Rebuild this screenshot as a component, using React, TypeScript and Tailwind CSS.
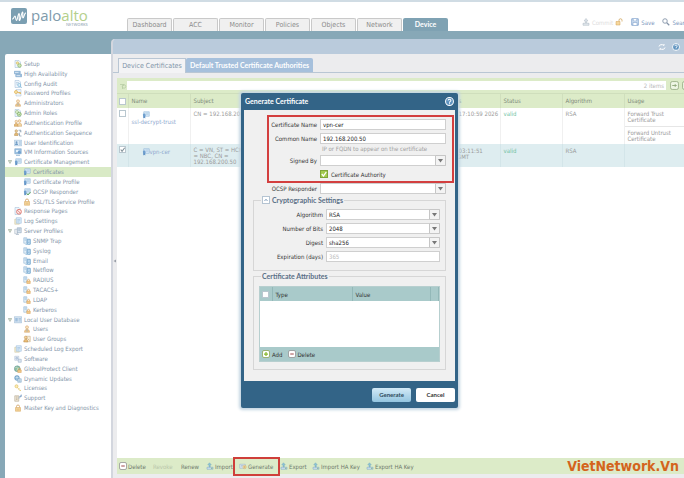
import { useState, type ReactNode } from 'react';

type IconName =
  | 'setup' | 'ha' | 'audit' | 'key' | 'person' | 'roles' | 'people' | 'sequence' | 'userid' | 'vm'
  | 'cert' | 'certOk' | 'lock' | 'blocked' | 'log' | 'servers' | 'server' | 'serverLock' | 'db'
  | 'group' | 'software' | 'globe' | 'updates' | 'license' | 'support' | 'upload' | 'generate';

const page = <path d="M2 1h8l3 3v11H2z" fill="#eef5fb" stroke="#9dbbd6" />;
const smallLock = (
  <>
    <path d="M9 10V8.500a2 2 0 0 1 4 0V10" fill="none" stroke="#d8a35c" strokeWidth="1.400" />
    <path d="M7.500 10h7v5h-7z" fill="#f0c98a" stroke="#d8a35c" />
  </>
);
const serverShape = (
  <>
    <path d="M1.500 1.500h6v11h-6z" fill="#e4eff8" stroke="#7fabcf" />
    <path d="M3 4h3M3 6.500h3" stroke="#7fabcf" />
  </>
);
const personShape = (
  <>
    <circle cx="8" cy="4.500" r="3" fill="#fbe3bf" stroke="#cf9d5f" />
    <path d="M3 14.500c0-4 2-6 5-6s5 2 5 6z" fill="#f1cd92" stroke="#cf9d5f" />
    <path d="M8 9v4" stroke="#7e9cc0" strokeWidth="1.500" />
  </>
);
const certShape = (
  <>
    <path d="M3.500 1.500h11v9h-11z" fill="#dcebf7" stroke="#7fa9d0" />
    <path d="M7 4h6M8 6.500h5" stroke="#8fb4d6" />
    <path d="M2.500 9v6l2-1.500 2 1.500V9z" fill="#5b8fc4" />
    <circle cx="4.500" cy="8" r="2.800" fill="#6f9fce" />
  </>
);

const icons: Record<IconName, ReactNode> = {
  setup: (
    <>
      {page}
      <circle cx="7" cy="6" r="2.500" fill="#f5e29a" stroke="#c9b25e" />
      <circle cx="11" cy="11" r="3.500" fill="#cfe6b8" stroke="#8fb56c" strokeWidth="1.500" />
    </>
  ),
  ha: (
    <>
      <path d="M.5 2.500h12v5H.5zM3.500 8.500h12v5h-12z" fill="#9fc0dd" stroke="#6d9bc4" />
      <path d="M2 5h7M5 11h7" stroke="#fff" />
    </>
  ),
  audit: (
    <>
      {page}
      <path d="M4 5h6M4 8h4" stroke="#9dbbd6" />
      <circle cx="10.500" cy="10" r="3" fill="#e2f2fb" stroke="#6fb0d6" strokeWidth="1.300" />
      <path d="m13 12.500 2.500 3" stroke="#6fb0d6" strokeWidth="1.500" />
    </>
  ),
  key: (
    <>
      <path d="M4 1h10v13H4z" fill="#edf3fa" stroke="#a9c0d8" />
      <circle cx="4" cy="6" r="3" fill="#fbe6ae" stroke="#dcae4d" strokeWidth="1.400" />
      <path d="M7 7h6v3M10.500 7v2.500" fill="none" stroke="#dcae4d" strokeWidth="1.500" />
    </>
  ),
  person: personShape,
  roles: (
    <>
      {page}
      <circle cx="6" cy="6" r="3" fill="#e6f3d9" stroke="#79a95c" />
      <circle cx="10.500" cy="10.500" r="4" fill="#cfe7bd" stroke="#79a95c" strokeWidth="1.300" />
      <path d="m9 10.500 1.500 1.500 2-3" fill="none" stroke="#5f9c46" />
    </>
  ),
  people: (
    <>
      <circle cx="4.500" cy="5" r="2.500" fill="#fbe3bf" stroke="#cf9d5f" />
      <circle cx="11" cy="4" r="2.700" fill="#fbe3bf" stroke="#cf9d5f" />
      <path d="M.5 14.500c0-4 1.500-6 4-6s4 2 4 6z" fill="#e9bd78" stroke="#b98847" />
      <path d="M7.500 14.500c0-4 1.500-6.500 4-6.500s4 2.500 4 6.500z" fill="#f3d9a5" stroke="#cf9d5f" />
    </>
  ),
  sequence: (
    <>
      <circle cx="4.500" cy="4" r="2.500" fill="#efd3a0" stroke="#b08a4f" />
      <path d="M1 13c0-4 1-5.500 3.500-5.500S8 9 8 13z" fill="#e3b873" stroke="#b08a4f" />
      <path d="M9 2.500h5l-2 3h3M8 10h3v4h4M11 7.500v2" fill="none" stroke="#7e93a8" strokeWidth="1.400" />
    </>
  ),
  userid: (
    <>
      <path d="M.5 2.500h15v11H.5z" fill="#dceaf6" stroke="#8db0d1" />
      <circle cx="5" cy="6.500" r="2" fill="#6f9cc6" />
      <path d="M2 12c0-2.500 1-3.500 3-3.500s3 1 3 3.500z" fill="#6f9cc6" />
      <path d="M10 5.500h4M10 8h4M10 10.500h4" stroke="#8db0d1" />
    </>
  ),
  vm: (
    <>
      <path d="M1.500 1.500h13v10h-13z" fill="#9fc3e2" stroke="#6d9bc4" />
      <path d="M4 4h5v4H4z" fill="#e7f2fb" />
      <circle cx="10.500" cy="8.500" r="3" fill="#6f9fce" />
      <path d="M4 14.500h8" stroke="#6d9bc4" strokeWidth="1.500" />
    </>
  ),
  cert: certShape,
  certOk: (
    <>
      {certShape}
      <path d="m7.500 11 2.500 3 5-6" fill="none" stroke="#67ab5c" strokeWidth="2" />
    </>
  ),
  lock: (
    <>
      <path d="M5 7V5a3 3 0 0 1 6 0v2" fill="none" stroke="#cfa060" strokeWidth="1.600" />
      <path d="M3 7h10v7.500H3z" fill="#f6d79e" stroke="#d3a055" />
      <path d="M5 10h6M5 12h6" stroke="#dfb36c" />
    </>
  ),
  blocked: (
    <>
      {page}
      <circle cx="10" cy="9.500" r="4.800" fill="#fdeceb" stroke="#d9685f" strokeWidth="1.600" />
      <path d="m7 6.500 6 6" stroke="#d9685f" strokeWidth="1.600" />
    </>
  ),
  log: (
    <>
      <path d="M1.500 4.500h9v10h-9z" fill="#f7efd0" stroke="#c9c19a" />
      <path d="M4.500 1.500h10v11h-10z" fill="#e0eefa" stroke="#88b1d6" />
      <path d="M6.500 5h6M6.500 7.500h6M6.500 10h4" stroke="#88b1d6" />
    </>
  ),
  servers: (
    <>
      <path d="M1.500 4.500h6v9h-6z" fill="#eef1f4" stroke="#9aaab9" />
      <path d="M6.500 1.500h8v10h-8z" fill="#d6e2ed" stroke="#8299b0" />
      <path d="M8.500 4h4M8.500 6.500h4M4 15h6" stroke="#8299b0" />
    </>
  ),
  server: (
    <>
      {serverShape}
      <path d="M8.500 4.500h6v10h-6z" fill="#d3e6f5" stroke="#5f9ac8" strokeWidth="1.600" />
      <path d="M10 8h3M10 11h3M5 15h3" stroke="#5f9ac8" />
    </>
  ),
  serverLock: (
    <>
      {serverShape}
      {smallLock}
    </>
  ),
  db: (
    <>
      <path d="M.5 1.500h15v12H.5z" fill="#dbe8f4" stroke="#8aaccd" />
      <path d="M2.500 4h5v7h-5z" fill="#9fbfdd" />
      <path d="M9 5h5M9 7.500h5M9 10h5" stroke="#7ea5ca" />
    </>
  ),
  group: (
    <>
      <path d="M6.500 2.500h8v11h-8z" fill="#f6edd9" stroke="#c3a67a" />
      <circle cx="5.500" cy="5" r="2.800" fill="#f4d5a0" stroke="#b98847" />
      <path d="M1.500 14c0-4 1.500-5.500 4-5.500s4 1.500 4 5.500z" fill="#e9bd78" stroke="#b98847" />
      <path d="m9 7 4 4" stroke="#b98847" />
    </>
  ),
  software: (
    <>
      <path d="M1.500 2.500h8v8h-8z" fill="#edf2f8" stroke="#a3b5cc" />
      <circle cx="5.500" cy="6.500" r="2" fill="#c7d6e8" stroke="#90a8c6" />
      <path d="M8.500 8.500h6v6h-6z" fill="#dce6f1" stroke="#90a8c6" />
    </>
  ),
  globe: (
    <>
      <circle cx="6.500" cy="7.500" r="5.800" fill="#8fbf9e" stroke="#5d8f9d" />
      <path d="M3 5c3-2 3 2 5 1s-1 5-3 4" fill="none" stroke="#e7f4ec" strokeWidth="1.300" />
      {smallLock}
    </>
  ),
  updates: (
    <>
      <circle cx="6" cy="6" r="4.800" fill="#8ab6d6" stroke="#5a8db8" />
      <path d="M3 5h6M6 2v8" stroke="#e6f1f9" />
      <path d="M7.500 7.500h7v7h-7z" fill="#e2edf6" stroke="#6f98bd" />
      <path d="M9 10h4M9 12.500h4" stroke="#6f98bd" />
    </>
  ),
  license: (
    <>
      <circle cx="5" cy="4.500" r="3" fill="#fcedb9" stroke="#dfc05c" strokeWidth="1.300" />
      <path d="m7 7 5 6.500 2-1.500M9.500 10l1.500-1.200" fill="none" stroke="#dfc05c" strokeWidth="1.500" />
    </>
  ),
  support: (
    <>
      <path d="M1.500 3.500h8v11h-8z" fill="#eee6d6" stroke="#a99c80" />
      <path d="M4 6h3M4 8.500h3M4 11h3" stroke="#a99c80" />
      <path d="M9 8c3 0 5-2 5-6M14.500 1v4h-4" fill="none" stroke="#7c9fc6" strokeWidth="1.500" />
    </>
  ),
  upload: (
    <>
      <path d="M2 10.500h12v4H2z" fill="#cfe0ee" stroke="#7ba4c4" />
      <path d="M7 1.500 3.500 5.500H6V10h2.500V5.500h2z" fill="#8fc4d8" stroke="#6ba3bb" strokeWidth=".8" />
      <path d="M10 12.500h3" stroke="#6bab6b" strokeWidth="1.500" />
    </>
  ),
  generate: (
    <>
      <path d="M1.500 4.500h11v8h-11z" fill="#e1ecf5" stroke="#8ca9c2" />
      <path d="M3.500 7h5M3.500 9.500h3" stroke="#8ca9c2" />
      <circle cx="11" cy="10" r="3.300" fill="#f6e3b4" stroke="#c9a75a" />
      <path d="M11 8v4M9 10h4" stroke="#c9a75a" />
    </>
  ),
};

function Icon({ name, className = 'size-2' }: { name: IconName; className?: string }) {
  return (
    <svg viewBox="0 0 16 16" className={`shrink-0 ${className}`} aria-hidden="true">
      {icons[name]}
    </svg>
  );
}

type NavItem = { label: string; icon: IconName; child?: boolean; open?: boolean; active?: boolean };

const navItems: NavItem[] = [
  { label: 'Setup', icon: 'setup' },
  { label: 'High Availability', icon: 'ha' },
  { label: 'Config Audit', icon: 'audit' },
  { label: 'Password Profiles', icon: 'key' },
  { label: 'Administrators', icon: 'person' },
  { label: 'Admin Roles', icon: 'roles' },
  { label: 'Authentication Profile', icon: 'people' },
  { label: 'Authentication Sequence', icon: 'sequence' },
  { label: 'User Identification', icon: 'userid' },
  { label: 'VM Information Sources', icon: 'vm' },
  { label: 'Certificate Management', icon: 'cert', open: true },
  { label: 'Certificates', icon: 'cert', child: true, active: true },
  { label: 'Certificate Profile', icon: 'cert', child: true },
  { label: 'OCSP Responder', icon: 'certOk', child: true },
  { label: 'SSL/TLS Service Profile', icon: 'lock', child: true },
  { label: 'Response Pages', icon: 'blocked' },
  { label: 'Log Settings', icon: 'log' },
  { label: 'Server Profiles', icon: 'servers', open: true },
  { label: 'SNMP Trap', icon: 'server', child: true },
  { label: 'Syslog', icon: 'server', child: true },
  { label: 'Email', icon: 'server', child: true },
  { label: 'Netflow', icon: 'server', child: true },
  { label: 'RADIUS', icon: 'serverLock', child: true },
  { label: 'TACACS+', icon: 'serverLock', child: true },
  { label: 'LDAP', icon: 'serverLock', child: true },
  { label: 'Kerberos', icon: 'serverLock', child: true },
  { label: 'Local User Database', icon: 'db', open: true },
  { label: 'Users', icon: 'person', child: true },
  { label: 'User Groups', icon: 'group', child: true },
  { label: 'Scheduled Log Export', icon: 'log' },
  { label: 'Software', icon: 'software' },
  { label: 'GlobalProtect Client', icon: 'globe' },
  { label: 'Dynamic Updates', icon: 'updates' },
  { label: 'Licenses', icon: 'license' },
  { label: 'Support', icon: 'support' },
  { label: 'Master Key and Diagnostics', icon: 'lock' },
];

const mainTabs = ['Dashboard', 'ACC', 'Monitor', 'Policies', 'Objects', 'Network', 'Device'];

function Logo() {
  return (
    <div className="flex items-start gap-1">
      <svg viewBox="0 0 32 32" className="size-4" aria-hidden="true">
        <rect width="32" height="32" rx="4" fill="#7b9fb2" />
        <path
          d="M3 22c3 0 3-6 5-6s1 9 3 9 3-14 5-14-1 14 1 14 4-17 6-17-1 12 1 12 2-8 5-10"
          fill="none"
          stroke="#fff"
          strokeWidth="2.200"
          strokeLinecap="round"
        />
      </svg>
      <div className="flex flex-col items-end font-['Open_Sans',sans-serif]">
        <span className="text-[15px] leading-[15px] text-[#7f9bac]">
          palo<span className="text-[#b4cf8c]">alto</span>
        </span>
        <span className="text-[4px] leading-1 font-semibold text-[#9fb2bd]">NETWORKS</span>
      </div>
    </div>
  );
}

function HelpIcon({ className }: { className: string }) {
  return (
    <svg viewBox="0 0 16 16" className={className} aria-hidden="true">
      <circle cx="8" cy="8" r="7" fill="#5f93bf" stroke="#fff" strokeWidth="1.800" />
      <path d="M5.500 6.300C5.500 3.300 10.500 3.300 10.500 6.200 10.500 8 8 7.800 8 10M8 11.300v1.500" fill="none" stroke="#fff" strokeWidth="1.800" />
    </svg>
  );
}

function Header() {
  return (
    <header className="flex h-[31px] items-end justify-between border-t-2 border-[#d0dce4] bg-white pl-[11px]">
      <div className="flex w-[116px] shrink-0 self-start pt-1.5">
        <Logo />
      </div>
      <nav className="flex flex-1 gap-px">
        {mainTabs.map(tab => (
          <a
            key={tab}
            href="#"
            className={
              tab === 'Device'
                ? 'flex h-[13px] w-[45px] items-center justify-center rounded-t-xs bg-[#7fa2b3] font-[Lato,sans-serif] text-[7px] font-bold text-white'
                : 'flex h-[13px] w-[45px] items-center justify-center rounded-t-xs border border-b-0 border-[#c9c9c9] bg-[#f0f0f0] text-[7px] text-[#8b8b8b]'
            }
          >
            {tab}
          </a>
        ))}
      </nav>
      <div className="flex h-[18px] w-[102px] shrink-0 items-center overflow-hidden text-[6px] whitespace-nowrap text-[#7c96bd]">
        <button type="button" disabled className="flex items-center gap-0.5 text-[#dcdcdc]">
          <svg viewBox="0 0 16 16" className="size-2" aria-hidden="true">
            <path d="M2 10.500h12v4H2zM8 1l3.500 4.500h-2V9h-3V5.500h-2z" fill="#e3e9ee" stroke="#a4b1bc" />
          </svg>
          Commit
        </button>
        <svg viewBox="0 0 16 16" className="ml-0.5 size-2 shrink-0" aria-hidden="true">
          <path d="M8 7V4.500a3 3 0 0 1 6 0V7" fill="none" stroke="#d2a55b" strokeWidth="1.600" />
          <path d="M2 7h8v7H2z" fill="#f6d79e" stroke="#d3a055" />
        </svg>
        <button type="button" className="ml-2 flex items-center gap-0.5">
          <svg viewBox="0 0 16 16" className="size-2" aria-hidden="true">
            <path d="M1.500 1.500h13v13h-13z" fill="#dbe8f5" stroke="#6d93c4" strokeWidth="1.500" />
            <path d="M4.500 2v4h7V2M4 14V9h8v5" fill="#fff" stroke="#6d93c4" />
          </svg>
          Save
        </button>
        <button type="button" className="ml-2 flex items-center gap-0.5">
          <svg viewBox="0 0 16 16" className="size-2" aria-hidden="true">
            <circle cx="6" cy="6" r="4.500" fill="none" stroke="#8494a8" strokeWidth="1.800" />
            <path d="m9.500 9.500 5 5" stroke="#8494a8" strokeWidth="2.500" />
          </svg>
          Search
        </button>
      </div>
    </header>
  );
}

function Sidebar() {
  return (
    <nav className="mt-[23px] w-[106px] shrink-0 rounded-tl-xs bg-white pt-[5px]">
      <ul className="grid h-[354px] auto-rows-fr">
        {navItems.map(item => (
          <li key={item.label} className={item.active ? 'flex bg-[#d9eac6]' : 'flex'}>
            <a
              href="#"
              className={`flex items-center gap-0.5 text-[6px] leading-none whitespace-nowrap text-[#8495a9] ${item.child ? 'pl-[18px]' : item.open ? 'pl-[3px]' : 'pl-[9px]'}`}
            >
              {item.open && (
                <svg viewBox="0 0 8 8" className="size-1" aria-hidden="true">
                  <path d="M.5 1h7L4 7z" fill="#d5ddd0" stroke="#8f9c8a" />
                </svg>
              )}
              <Icon name={item.icon} />
              {item.label}
            </a>
          </li>
        ))}
      </ul>
    </nav>
  );
}

function Tick({ label, checked }: { label: string; checked?: boolean }) {
  return (
    <span className="relative block size-[7px]">
      <input
        type="checkbox"
        aria-label={label}
        defaultChecked={checked}
        className="peer block size-[7px] appearance-none border border-[#b9c7cf] bg-white"
      />
      <svg viewBox="0 0 8 8" className="pointer-events-none absolute inset-0 hidden size-[7px] peer-checked:block" aria-hidden="true">
        <path d="m2 4 1.500 2L6.500 2" fill="none" stroke="#7f8f97" strokeWidth="1.200" />
      </svg>
    </span>
  );
}

function CertificateTable() {
  return (
    <table className="w-full min-w-[569px] table-fixed text-left align-top text-[6px] leading-[6px] text-[#9a9a9a]">
      <colgroup>
        <col className="w-[11px]" />
        <col className="w-[62px]" />
        <col className="w-[62px]" />
        <col className="w-[62px]" />
        <col className="w-[62px]" />
        <col className="w-[62px]" />
        <col className="w-[62px]" />
        <col className="w-[62px]" />
        <col className="w-[62px]" />
        <col />
      </colgroup>
      <thead>
        <tr className="h-3.5 bg-[#dcebc8] text-[#7e8a7a] *:border-r *:border-[#d0dfbd] *:px-[3px] *:font-normal">
          <th className="pr-0! pl-0.5!"><Tick label="Select all" /></th>
          <th>Name</th>
          <th>Subject</th>
          <th>Issuer</th>
          <th>CA</th>
          <th>Key</th>
          <th>Expires</th>
          <th>Status</th>
          <th>Algorithm</th>
          <th>Usage</th>
        </tr>
      </thead>
      <tbody>
        <tr className="h-9 bg-white *:border-r *:border-[#f0f0f0] *:px-[3px] *:py-[3px] *:align-top">
          <td className="py-0.5! pr-0! pl-0.5!"><Tick label="Select ssl-decrypt-trust" /></td>
          <td className="text-[#8fa9cf]">
            <Icon name="cert" className="ml-2.5 size-2" />
            <a href="#">ssl-decrypt-trust</a>
          </td>
          <td className="overflow-hidden whitespace-nowrap">CN = 192.168.200.50</td>
          <td />
          <td />
          <td />
          <td className="whitespace-nowrap">Mar 4 17:10:59 2026</td>
          <td className="text-[#6fbf9f]">valid</td>
          <td>RSA</td>
          <td className="p-0!">
            <div className="h-[19px] border-b border-[#e6e6e6] px-[3px] py-[3px]">Forward Trust<br />Certificate</div>
            <div className="px-[3px] pt-[3px]">Forward Untrust<br />Certificate</div>
          </td>
        </tr>
        <tr className="h-[23px] bg-[#deedf0] *:border-r *:border-[#d3e5e9] *:px-[3px] *:pt-1 *:align-top">
          <td className="pt-0.5! pr-0! pl-0.5!"><Tick label="Select vpn-cer" checked /></td>
          <td className="text-[#8fa9cf]">
            <a href="#" className="flex items-center pl-2.5"><Icon name="cert" />vpn-cer</a>
          </td>
          <td className="pt-[3px]! whitespace-nowrap">C = VN, ST = HCM, L<br />= NBC, CN =<br />192.168.200.50</td>
          <td />
          <td />
          <td />
          <td className="whitespace-nowrap">Mar 7 03:11:51<br />2026 GMT</td>
          <td className="text-[#6fbf9f]">valid</td>
          <td>RSA</td>
          <td />
        </tr>
      </tbody>
    </table>
  );
}

function MinusIcon() {
  return (
    <svg viewBox="0 0 16 16" className="size-2 shrink-0" aria-hidden="true">
      <rect x="1" y="1" width="14" height="14" rx="3" fill="#fff" stroke="#8f8f8f" strokeWidth="1.500" />
      <path d="M4.500 8h7" stroke="#a04848" strokeWidth="2" />
    </svg>
  );
}

function ActionBar() {
  return (
    <footer className="mb-1 flex h-4 items-center bg-[#dcebc8] pl-0.5 text-[6px] whitespace-nowrap text-[#6f7a6c]">
      <button type="button" className="flex w-[34px] items-center gap-px"><MinusIcon />Delete</button>
      <button type="button" disabled className="w-7 text-left text-[#b9c6ab]">Revoke</button>
      <button type="button" className="w-[25px] text-left">Renew</button>
      <button type="button" className="flex w-[33px] items-center gap-px"><Icon name="upload" />Import</button>
      <button type="button" className="relative flex w-[41px] items-center gap-px">
        <Icon name="generate" />Generate
        <span className="absolute -inset-y-[5px] right-0 -left-1.5 border-2 border-[#cf3f3a]" />
      </button>
      <button type="button" className="flex w-8 items-center gap-px"><Icon name="upload" />Export</button>
      <button type="button" className="flex w-[54px] items-center gap-px"><Icon name="upload" />Import HA Key</button>
      <button type="button" className="flex items-center gap-px"><Icon name="upload" />Export HA Key</button>
    </footer>
  );
}

function Content() {
  return (
    <main className="relative mt-2 flex min-w-0 flex-1 flex-col overflow-hidden rounded-tl-sm border-l-2 border-[#d3d6de] bg-[#ececee]">
      <button type="button" aria-label="Collapse menu" className="absolute top-1/2 left-0">
        <svg viewBox="0 0 8 8" className="size-1" aria-hidden="true">
          <path d="M6 1v6L1 4z" fill="#9a9fa8" />
        </svg>
      </button>
      <div className="flex h-[15px] shrink-0 items-center justify-end gap-1.5 bg-[#bacbdc] pr-1">
        <svg viewBox="0 0 16 16" className="size-2" aria-hidden="true">
          <path d="M2 7c0-4 7-5 10-2V2M14 9c0 4-7 5-10 2v3" fill="none" stroke="#fff" strokeWidth="2" />
        </svg>
        <HelpIcon className="size-2" />
      </div>
      <div className="flex h-[19px] shrink-0 items-end border-b border-[#b9c6d4] pl-[5px]">
        <button type="button" className="-mb-px h-[15px] w-[68px] border border-b-0 border-[#b9c6d4] bg-[#f3f3f5] text-[7px] text-[#8193a8]">
          Device Certificates
        </button>
        <button type="button" className="h-3.5 rounded-t-xs bg-[#a6c0dc] px-1 font-[Lato,sans-serif] text-[7px] font-bold text-white">
          Default Trusted Certificate Authorities
        </button>
      </div>
      <div className="flex flex-1 flex-col pt-[5px] pl-1">
        <div className="flex h-4 items-center border-b border-[#cfdebc] bg-[#dcebc8] pl-0.5">
          <svg viewBox="0 0 16 16" className="size-2 shrink-0" aria-hidden="true">
            <path d="M2 5h8l-3 4v5" fill="none" stroke="#b6cba3" strokeWidth="1.500" />
            <circle cx="10" cy="9" r="3.500" fill="none" stroke="#b6cba3" strokeWidth="1.500" />
          </svg>
          <input aria-label="Filter certificates" className="h-[9px] min-w-0 flex-1 bg-white" />
          <span className="flex h-[9px] items-center bg-white pr-0.5 text-[6px] text-[#b7b7b7]">2 items</span>
          <div className="ml-1 flex w-3.5 shrink-0 gap-[3px] overflow-hidden">
            <button type="button" aria-label="Apply filter" className="shrink-0">
              <svg viewBox="0 0 16 16" className="size-[9px]" aria-hidden="true">
                <rect x="1" y="1" width="14" height="14" rx="3" fill="#eef6e4" stroke="#97ad84" strokeWidth="1.500" />
                <path d="M4 8h7M8.500 5.500 11 8l-2.500 2.500" fill="none" stroke="#85a070" strokeWidth="1.500" />
              </svg>
            </button>
            <button type="button" aria-label="Clear filter" className="shrink-0">
              <svg viewBox="0 0 16 16" className="size-[9px]" aria-hidden="true">
                <rect x="1" y="1" width="14" height="14" rx="3" fill="#eef6e4" stroke="#97ad84" strokeWidth="1.500" />
                <path d="m5 5 6 6M11 5l-6 6" stroke="#85a070" strokeWidth="1.500" />
              </svg>
            </button>
          </div>
        </div>
        <div className="flex-1 overflow-hidden bg-white">
          <CertificateTable />
        </div>
        <ActionBar />
      </div>
    </main>
  );
}

const fieldClass = 'h-[11px] w-full border border-[#cfcfcf] bg-white px-0.5 text-[6px] text-[#222222] placeholder:text-[#bbbbbb]';

function Field({ id, label, children }: { id: string; label: string; children: ReactNode }) {
  return (
    <div className="flex h-3.5 items-center">
      <label htmlFor={id} className="w-[67px] shrink-0 pr-[3px] text-right">
        {label}
      </label>
      <div className="relative flex-1">{children}</div>
    </div>
  );
}

function Dropdown({ id, value = '' }: { id: string; value?: string }) {
  return (
    <>
      <select id={id} defaultValue={value} className={`${fieldClass} block appearance-none`}>
        <option value={value}>{value}</option>
      </select>
      <svg viewBox="0 0 22 22" className="pointer-events-none absolute top-0 right-0 size-[11px]" aria-hidden="true">
        <path d="M1 1h20v20H1z" fill="#f3f3f3" stroke="#c6c6c6" strokeWidth="2" />
        <path d="M6 8h10l-5 7z" fill="#777777" />
      </svg>
    </>
  );
}

function GenerateDialog() {
  const [authority, setAuthority] = useState(true);

  return (
    <section
      role="dialog"
      aria-label="Generate Certificate"
      className="w-[217px] rounded-xs bg-[#336487] px-[3px] text-[6px] text-[#333333] shadow-[0_0_3px_2px_#c4d6e2]"
    >
      <div className="flex h-[17px] items-center justify-between px-px">
        <h2 className="font-[Lato,sans-serif] text-[7px] font-bold text-white">Generate Certificate</h2>
        <HelpIcon className="size-[9px]" />
      </div>

      <form className="relative bg-[#f0f0f0] px-[9px] pt-[7px] pb-[11px]" onSubmit={e => e.preventDefault()}>
        <div className="pointer-events-none absolute top-[5px] right-px left-[23px] h-[68px] border-2 border-[#d33f3f]" />
        <Field id="cert-name" label="Certificate Name">
          <input id="cert-name" defaultValue="vpn-cer" className={`${fieldClass} block`} />
        </Field>
        <Field id="common-name" label="Common Name">
          <input id="common-name" defaultValue="192.168.200.50" className={`${fieldClass} block`} />
        </Field>
        <p className="h-2 pl-[69px] leading-2 text-[#a0a0a0]">IP or FQDN to appear on the certificate</p>
        <Field id="signed-by" label="Signed By">
          <Dropdown id="signed-by" />
        </Field>
        <label className="flex h-3.5 items-center gap-[3px] pl-[67px]">
          <span className="relative size-2">
            <input
              type="checkbox"
              checked={authority}
              onChange={e => setAuthority(e.target.checked)}
              className="peer block size-2 appearance-none border border-[#7fa53a] bg-white checked:bg-[#a3cb4e]"
            />
            <svg viewBox="0 0 16 16" className="pointer-events-none absolute inset-0 hidden size-2 peer-checked:block" aria-hidden="true">
              <path d="m3.500 8 3.500 4 5.500-8" fill="none" stroke="#fff" strokeWidth="2.500" />
            </svg>
          </span>
          Certificate Authority
        </label>
        <Field id="ocsp" label="OCSP Responder">
          <Dropdown id="ocsp" />
        </Field>

        <fieldset className="border border-[#d6d6d6] px-[5px] pt-0.5 pb-[7px]">
          <legend className="ml-0.5 flex h-2.5 items-center gap-0.5 px-px font-[Lato,sans-serif] text-[7px] leading-none font-bold text-[#5a6f86]">
            <button type="button" aria-label="Collapse" className="flex size-2 items-center justify-center border border-[#b5c4d2] bg-white">
              <svg viewBox="0 0 8 8" className="size-1" aria-hidden="true">
                <path d="m1 6 3-3.500L7 6" fill="none" stroke="#5a7fa5" strokeWidth="1.500" />
              </svg>
            </button>
            Cryptographic Settings
          </legend>
          <Field id="algorithm" label="Algorithm">
            <Dropdown id="algorithm" value="RSA" />
          </Field>
          <Field id="bits" label="Number of Bits">
            <Dropdown id="bits" value="2048" />
          </Field>
          <Field id="digest" label="Digest">
            <Dropdown id="digest" value="sha256" />
          </Field>
          <Field id="expiration" label="Expiration (days)">
            <input id="expiration" placeholder="365" className={`${fieldClass} block`} />
          </Field>
        </fieldset>

        <fieldset className="border border-[#d6d6d6] px-[5px] pt-[5px] pb-[7px]">
          <legend className="ml-0.5 h-2.5 px-px font-[Lato,sans-serif] text-[7px] leading-2.5 font-bold text-[#5a6f86]">Certificate Attributes</legend>
          <div className="border border-[#b7cfcf] bg-white">
            <table className="w-full table-fixed text-left">
              <thead>
                <tr className="h-3.5 bg-[#a9caca] *:border-r *:border-[#93b8b8] *:font-normal">
                  <th className="w-3 pl-0.5"><Tick label="Select all attributes" /></th>
                  <th className="w-20 pl-[3px]">Type</th>
                  <th className="pl-[3px]">Value</th>
                  <th className="w-2" />
                </tr>
              </thead>
            </table>
            <div className="h-[46px]" />
            <div className="flex h-3.5 items-center gap-1.5 bg-[#a9caca] pl-0.5">
              <button type="button" className="flex items-center gap-0.5">
                <svg viewBox="0 0 16 16" className="size-2" aria-hidden="true">
                  <rect x="1" y="1" width="14" height="14" rx="3" fill="#fff" stroke="#8aa04f" strokeWidth="1.500" />
                  <path d="M4 8h8M8 4v8" stroke="#8aba2f" strokeWidth="2.500" />
                </svg>
                Add
              </button>
              <button type="button" className="flex items-center gap-px"><MinusIcon />Delete</button>
            </div>
          </div>
        </fieldset>
      </form>

      <div className="flex h-[27px] items-center justify-end gap-[5px]">
        <button type="submit" className="h-3.5 w-[39px] rounded-xs bg-linear-to-b from-[#d3eaf7] to-[#94c5e0] font-[Lato,sans-serif] text-[6px] font-bold text-[#2f4a5c]">
          Generate
        </button>
        <button type="button" className="h-3.5 w-[39px] rounded-xs bg-white font-[Lato,sans-serif] text-[6px] font-bold text-[#333333]">
          Cancel
        </button>
      </div>
    </section>
  );
}

export default function App() {
  return (
    <div className="relative flex min-h-screen flex-col overflow-hidden bg-[#87a8b7] font-['DejaVu_Sans_Condensed','Noto_Sans',sans-serif]">
      <Header />
      <div className="flex flex-1 pl-[5px]">
        <Sidebar />
        <Content />
      </div>
      <div className="absolute inset-0 flex items-start justify-center pt-[93px] pl-[15px]">
        <GenerateDialog />
      </div>
      <span className="absolute right-[5px] bottom-0.5 text-[14px] leading-5 font-bold text-[#d4641c]">VietNetwork.Vn</span>
    </div>
  );
}
